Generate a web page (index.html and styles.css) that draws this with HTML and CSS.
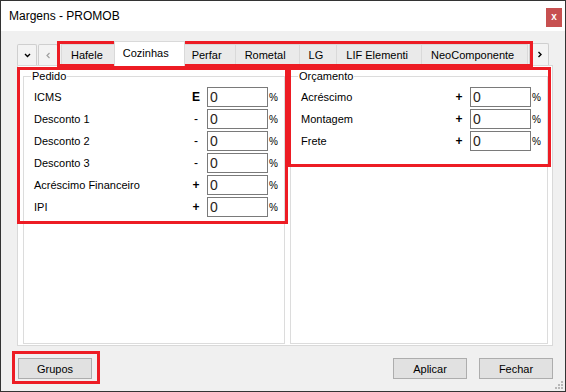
FILE: index.html
```html
<!DOCTYPE html>
<html>
<head>
    <title>Margens - PROMOB</title>
    <link rel="stylesheet" href="styles.css">
</head>
<body>
    <div class="window">
        <div class="titlebar">
            <span class="title">Margens - PROMOB</span>
            <span class="close">x</span>
        </div>

        <div class="tabstrip">
            <span class="scroll-btn">
                <svg width="7" height="7" viewBox="0 0 7 7"><polyline points="1,2 3.5,4.5 6,2" fill="none" stroke="#000" stroke-width="1.4"/></svg>
            </span>
            <span class="scroll-btn disabled">
                <svg width="7" height="7" viewBox="0 0 7 7"><polyline points="4.5,1 2,3.5 4.5,6" fill="none" stroke="#a0a0a0" stroke-width="1.2"/></svg>
            </span>
            <ul class="tabs">
                <li>Hafele</li>
                <li class="active">Cozinhas</li>
                <li>Perfar</li>
                <li>Rometal</li>
                <li>LG</li>
                <li>LIF Elementi</li>
                <li>NeoComponente</li>
            </ul>
            <span class="scroll-btn scroll-right">
                <svg width="7" height="7" viewBox="0 0 7 7"><polyline points="2.5,1 5,3.5 2.5,6" fill="none" stroke="#000" stroke-width="1.4"/></svg>
            </span>
        </div>

        <div class="tabpage">
            <fieldset class="group group-left">
                <legend>Pedido</legend>
                <div class="rows">
                    <div class="row"><label>ICMS</label><span class="sign">E</span><input type="text" value="0"><span class="pct">%</span></div>
                    <div class="row"><label>Desconto 1</label><span class="sign minus">-</span><input type="text" value="0"><span class="pct">%</span></div>
                    <div class="row"><label>Desconto 2</label><span class="sign minus">-</span><input type="text" value="0"><span class="pct">%</span></div>
                    <div class="row"><label>Desconto 3</label><span class="sign minus">-</span><input type="text" value="0"><span class="pct">%</span></div>
                    <div class="row"><label>Acréscimo Financeiro</label><span class="sign">+</span><input type="text" value="0"><span class="pct">%</span></div>
                    <div class="row"><label>IPI</label><span class="sign">+</span><input type="text" value="0"><span class="pct">%</span></div>
                </div>
            </fieldset>
            <fieldset class="group group-right">
                <legend>Orçamento</legend>
                <div class="rows">
                    <div class="row"><label>Acréscimo</label><span class="sign">+</span><input type="text" value="0"><span class="pct">%</span></div>
                    <div class="row"><label>Montagem</label><span class="sign">+</span><input type="text" value="0"><span class="pct">%</span></div>
                    <div class="row"><label>Frete</label><span class="sign">+</span><input type="text" value="0"><span class="pct">%</span></div>
                </div>
            </fieldset>
        </div>

        <div class="footer">
            <button>Grupos</button>
            <span class="spacer"></span>
            <button>Aplicar</button>
            <button>Fechar</button>
        </div>

        <!-- red annotation frames -->
        <div class="mark mark-tabs"></div>
        <div class="mark mark-pedido"></div>
        <div class="mark mark-orcamento"></div>
        <div class="mark mark-grupos"></div>

        <svg class="grip" width="9" height="9" viewBox="0 0 9 9">
            <rect x="7" y="1" width="2" height="2" fill="#b8b8b8"/>
            <rect x="4" y="4" width="2" height="2" fill="#b8b8b8"/>
            <rect x="7" y="4" width="2" height="2" fill="#b8b8b8"/>
            <rect x="1" y="7" width="2" height="2" fill="#b8b8b8"/>
            <rect x="4" y="7" width="2" height="2" fill="#b8b8b8"/>
            <rect x="7" y="7" width="2" height="2" fill="#b8b8b8"/>
        </svg>
    </div>
</body>
</html>
```

FILE: styles.css
```css
body {
    font-family: "Liberation Sans", Arial, sans-serif;
    font-size: 11px;
    color: #000;
    margin: 0;
    padding: 0;
}

.window {
    position: relative;
    width: 566px;
    height: 392px;
    box-sizing: border-box;
    border: 1px solid #333;
    background-color: #f0f0f0;
}

.titlebar {
    display: flex;
    height: 30px;
    background-color: #ffffff;
}

.title {
    flex: 1;
    padding-left: 8px;
    font-size: 12px;
    line-height: 30px;
}

.close {
    width: 16px;
    height: 19px;
    margin-top: 7px;
    margin-right: 3px;
    background-color: #c75050;
    color: #ffffff;
    font-weight: bold;
    font-size: 10px;
    line-height: 17px;
    text-align: center;
}

/* tab strip */

.tabstrip {
    display: flex;
    align-items: flex-end;
    height: 23px;
    margin-top: 11px;
    padding-left: 16px;
}

.scroll-btn {
    display: flex;
    align-items: center;
    justify-content: center;
    width: 20px;
    height: 21px;
    box-sizing: border-box;
    border: 1px solid #cfcfcf;
    border-bottom: none;
    border-radius: 2px 2px 0 0;
    background-color: #f3f3f3;
    margin-right: 1px;
}

.scroll-right {
    height: 22px;
    margin-left: 1px;
}

.tabs {
    display: flex;
    align-items: flex-end;
    list-style-type: none;
    margin: 0 0 0 2px;
    padding: 0;
}

.tabs li {
    height: 21px;
    box-sizing: border-box;
    padding: 0 13px 0 9px;
    border: 1px solid #d9d9d9;
    border-bottom: none;
    margin-left: -1px;
    background-color: #eaeaea;
    line-height: 21px;
    white-space: nowrap;
}

.tabs li:first-child {
    margin-left: 0;
}

.tabs li.active {
    position: relative;
    z-index: 1;
    height: 25px;
    margin-bottom: -1px;
    padding: 0 15px 0 8px;
    margin-left: -3px;
    margin-right: -2px;
    background-color: #ffffff;
    line-height: 23px;
}

/* tab page */

.tabpage {
    display: flex;
    gap: 5px;
    height: 281px;
    box-sizing: border-box;
    margin: 0 12px 0 16px;
    padding: 4px 4px 1px 5px;
    border: 1px solid #d9d9d9;
    background-color: #ffffff;
}

.group {
    margin: 0;
    padding: 0 6px 0 0;
    min-width: 0;
    border: 1px solid #dcdcdc;
}

.group-left {
    width: 262px;
    box-sizing: border-box;
    flex: none;
}

.group-right {
    flex: 1;
}

.group legend {
    margin-left: 7px;
    padding: 0 1px;
    line-height: 13px;
}

.rows {
    padding-top: 4px;
    padding-left: 10px;
}

.row {
    display: flex;
    align-items: center;
    height: 20px;
    margin-bottom: 2px;
}

.row label {
    flex: 1;
}

.sign {
    width: 12px;
    margin-right: 5px;
    text-align: center;
    font-weight: bold;
    font-size: 12px;
}

.sign.minus {
    font-weight: normal;
}

.row input {
    width: 61px;
    height: 20px;
    box-sizing: border-box;
    margin: 0;
    padding: 0 0 0 2px;
    border: 1px solid #7a7a7a;
    font-family: "Liberation Sans", Arial, sans-serif;
    font-size: 14px;
    color: #2a2418;
    outline: none;
}

.pct {
    width: 9px;
    margin-left: 1px;
    font-size: 10px;
}

/* footer */

.footer {
    display: flex;
    gap: 12px;
    padding: 12px 12px 0 17px;
}

.spacer {
    flex: 1;
}

.footer button {
    width: 74px;
    height: 21px;
    margin: 0;
    padding: 0;
    border: 1px solid #adadad;
    background-color: #e1e1e1;
    font-family: "Liberation Sans", Arial, sans-serif;
    font-size: 11px;
    color: #000;
}

/* annotation frames drawn over the dialog */

.mark {
    position: absolute;
    box-sizing: border-box;
    border: 3px solid #ed1c24;
}

.mark-tabs {
    left: 56px;
    top: 40px;
    width: 476px;
    height: 26px;
}

.mark-pedido {
    left: 16px;
    top: 66px;
    width: 271px;
    height: 157px;
}

.mark-orcamento {
    left: 287px;
    top: 66px;
    width: 263px;
    height: 100px;
}

.mark-grupos {
    left: 11px;
    top: 350px;
    width: 88px;
    height: 33px;
}

.grip {
    position: absolute;
    right: 2px;
    bottom: 2px;
}
```
